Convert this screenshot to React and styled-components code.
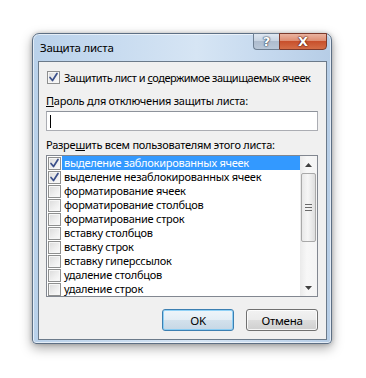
import React from "react";
import styled, { createGlobalStyle } from "styled-components";

const GlobalStyle = createGlobalStyle`
  html, body {
    margin: 0;
    padding: 0;
    background: #ffffff;
  }
  body {
    font-family: "Noto Sans", "Open Sans", "Liberation Sans", sans-serif;
    font-size: 11px;
    letter-spacing: -0.25px;
    color: #000;
  }
`;

const permissions = [
  { label: "выделение заблокированных ячеек", checked: true, selected: true },
  { label: "выделение незаблокированных ячеек", checked: true },
  { label: "форматирование ячеек" },
  { label: "форматирование столбцов" },
  { label: "форматирование строк" },
  { label: "вставку столбцов" },
  { label: "вставку строк" },
  { label: "вставку гиперссылок" },
  { label: "удаление столбцов" },
  { label: "удаление строк" },
];

const Check = ({ checked }) => (
  <Box>
    {checked && (
      <svg width="11" height="11" viewBox="0 0 11 11">
        <path
          d="M2 5.5 L4.5 8.5 L9 1.5"
          fill="none"
          stroke="#3a4f8a"
          strokeWidth="1.7"
          strokeLinecap="round"
          strokeLinejoin="round"
        />
      </svg>
    )}
  </Box>
);

const App = () => {
  return (
    <>
      <GlobalStyle />
      <Page>
        <Window>
          <TitleBar>
            <Title>Защита листа</Title>
            <Caption>
              <HelpButton>?</HelpButton>
              <CloseButton>X</CloseButton>
            </Caption>
          </TitleBar>
          <Client>
            <CheckRow>
              <Check checked />
              <span>
                Защитить лист и <u>с</u>одержимое защищаемых ячеек
              </span>
            </CheckRow>
            <Label>
              <u>П</u>ароль для отключения защиты листа:
            </Label>
            <TextBox>
              <Caret />
            </TextBox>
            <Label $gap={6}>
              Разре<u>ш</u>ить всем пользователям этого листа:
            </Label>
            <ListBox>
              <Items>
                {permissions.map((p) => (
                  <Item key={p.label}>
                    <Check checked={p.checked} />
                    <ItemText $selected={p.selected}>{p.label}</ItemText>
                  </Item>
                ))}
              </Items>
              <ScrollBar>
                <Arrow>
                  <svg width="7" height="4" viewBox="0 0 7 4">
                    <path d="M0 4 L3.5 0 L7 4 Z" fill="#404040" />
                  </svg>
                </Arrow>
                <Thumb>
                  <Grip />
                </Thumb>
                <Track />
                <Arrow>
                  <svg width="7" height="4" viewBox="0 0 7 4">
                    <path d="M0 0 L3.5 4 L7 0 Z" fill="#404040" />
                  </svg>
                </Arrow>
              </ScrollBar>
            </ListBox>
            <Buttons>
              <Button $default>OK</Button>
              <Button>Отмена</Button>
            </Buttons>
          </Client>
        </Window>
      </Page>
    </>
  );
};

export default App;

const Page = styled.div`
  width: 366px;
  height: 378px;
  padding: 33px 0 0 32px;
  box-sizing: border-box;
`;

const Window = styled.div`
  width: 300px;
  height: 311px;
  box-sizing: border-box;
  display: flex;
  flex-direction: column;
  border: 1px solid #5d6f84;
  border-radius: 7px 7px 4px 4px;
  background: linear-gradient(
    90deg,
    #b9d1ea 0%,
    #c9dcf0 30%,
    #d6e5f4 55%,
    #c4d8ee 80%,
    #b6cde6 100%
  );
  box-shadow: 0 4px 12px rgba(0, 0, 0, 0.35), 0 0 4px rgba(0, 0, 0, 0.2),
    inset 0 0 0 1px rgba(255, 255, 255, 0.6);
`;

const TitleBar = styled.div`
  height: 27px;
  display: flex;
  justify-content: space-between;
  align-items: flex-start;
  padding: 0 4px 0 7px;
`;

const Title = styled.div`
  margin-top: 6px;
  line-height: 15px;
  font-size: 11.5px;
`;

const Caption = styled.div`
  display: flex;
  margin-top: -1px;
`;

const HelpButton = styled.div`
  width: 26px;
  height: 17px;
  box-sizing: border-box;
  border: 1px solid #6e7f92;
  border-right: none;
  border-radius: 0 0 0 4px;
  background: linear-gradient(#dfe8f2 0%, #c8d4e2 45%, #aebcce 50%, #b9c7d8 100%);
  color: #fff;
  font-family: "DejaVu Sans", sans-serif;
  font-weight: bold;
  font-size: 13px;
  letter-spacing: 0;
  line-height: 15px;
  text-align: center;
  text-shadow: 0 0 1px #33475f, 0 0 1px #33475f, 0 0 2px #33475f;
`;

const CloseButton = styled.div`
  width: 48px;
  height: 17px;
  box-sizing: border-box;
  border: 1px solid #7c3a2c;
  border-radius: 0 0 4px 0;
  background: linear-gradient(#eab3a0 0%, #de8e73 45%, #c8502c 50%, #d46d46 100%);
  color: #fff;
  font-family: "DejaVu Sans", sans-serif;
  font-weight: bold;
  font-size: 13px;
  letter-spacing: 0;
  line-height: 15px;
  text-align: center;
  text-shadow: 0 0 1px #5b1e10, 0 0 1px #5b1e10, 0 0 2px #5b1e10;
`;

const Client = styled.div`
  flex: 1;
  margin: 0 4px 3px 5px;
  border: 1px solid #6b7a8a;
  background: #f0f0f0;
  padding: 9px 8px 0 7px;
  display: flex;
  flex-direction: column;
`;

const CheckRow = styled.div`
  display: flex;
  align-items: center;
  gap: 4px;
  height: 13px;
  line-height: 15px;
  margin-left: 1px;
  white-space: nowrap;
  letter-spacing: -0.5px;
`;

const Box = styled.div`
  width: 13px;
  height: 13px;
  flex: none;
  box-sizing: border-box;
  border: 1px solid #8e8f8f;
  background: linear-gradient(135deg, #dadada 0%, #eeeeee 55%, #fbfbfb 100%);
  box-shadow: inset 0 0 0 1px #f6f6f6;
  display: grid;
  place-items: center;
`;

const Label = styled.div`
  margin-top: ${(p) => p.$gap ?? 9}px;
  line-height: 15px;
  height: 15px;
  white-space: nowrap;
`;

const TextBox = styled.div`
  margin-top: 3px;
  height: 20px;
  box-sizing: border-box;
  border: 1px solid #abadb3;
  border-top-color: #8e939b;
  background: #fff;
  display: flex;
  align-items: center;
  padding-left: 3px;
`;

const Caret = styled.div`
  width: 1px;
  height: 13px;
  background: #000;
`;

const ListBox = styled.div`
  margin-top: 3px;
  height: 142px;
  box-sizing: border-box;
  border: 1px solid #828790;
  background: #fff;
  display: flex;
`;

const Items = styled.div`
  flex: 1;
  display: flex;
  flex-direction: column;
`;

const Item = styled.div`
  height: 14px;
  display: flex;
  align-items: center;
  padding-left: 1px;
  gap: 1px;
`;

const ItemText = styled.div`
  flex: 1;
  height: 14px;
  line-height: 14px;
  padding-left: 2px;
  background: ${(p) => (p.$selected ? "#3399ff" : "transparent")};
  color: ${(p) => (p.$selected ? "#fff" : "#000")};
  white-space: nowrap;
`;

const ScrollBar = styled.div`
  width: 17px;
  display: flex;
  flex-direction: column;
  background: linear-gradient(90deg, #eaeaea, #f7f7f7 40%, #f4f4f4);
`;

const Arrow = styled.div`
  height: 17px;
  display: grid;
  place-items: center;
`;

const Thumb = styled.div`
  height: 69px;
  margin: 0 1px;
  box-sizing: border-box;
  border: 1px solid #a9a9a9;
  border-radius: 2px;
  background: linear-gradient(90deg, #e8e8e8, #f6f6f6 45%, #dedede);
  display: grid;
  place-items: center;
`;

const Grip = styled.div`
  width: 7px;
  height: 7px;
  background: repeating-linear-gradient(
    #6a6a6a 0px,
    #6a6a6a 1px,
    transparent 1px,
    transparent 3px
  );
`;

const Track = styled.div`
  flex: 1;
`;

const Buttons = styled.div`
  margin-top: 12px;
  display: flex;
  justify-content: flex-end;
  gap: 12px;
`;

const Button = styled.div`
  width: 72px;
  height: 22px;
  box-sizing: border-box;
  border: 1px solid ${(p) => (p.$default ? "#3c7fb1" : "#707070")};
  border-radius: 3px;
  background: ${(p) =>
    p.$default
      ? "linear-gradient(#eef5fa 0%, #e3edf5 50%, #d3e1ec 50%, #c6d7e5 100%)"
      : "linear-gradient(#f2f2f2 0%, #ebebeb 50%, #dddddd 50%, #cfcfcf 100%)"};
  box-shadow: inset 0 0 0 1px
    ${(p) => (p.$default ? "rgba(120, 200, 245, 0.8)" : "rgba(255, 255, 255, 0.8)")};
  display: grid;
  place-items: center;
  line-height: 15px;
  font-size: 11.5px;
`;
